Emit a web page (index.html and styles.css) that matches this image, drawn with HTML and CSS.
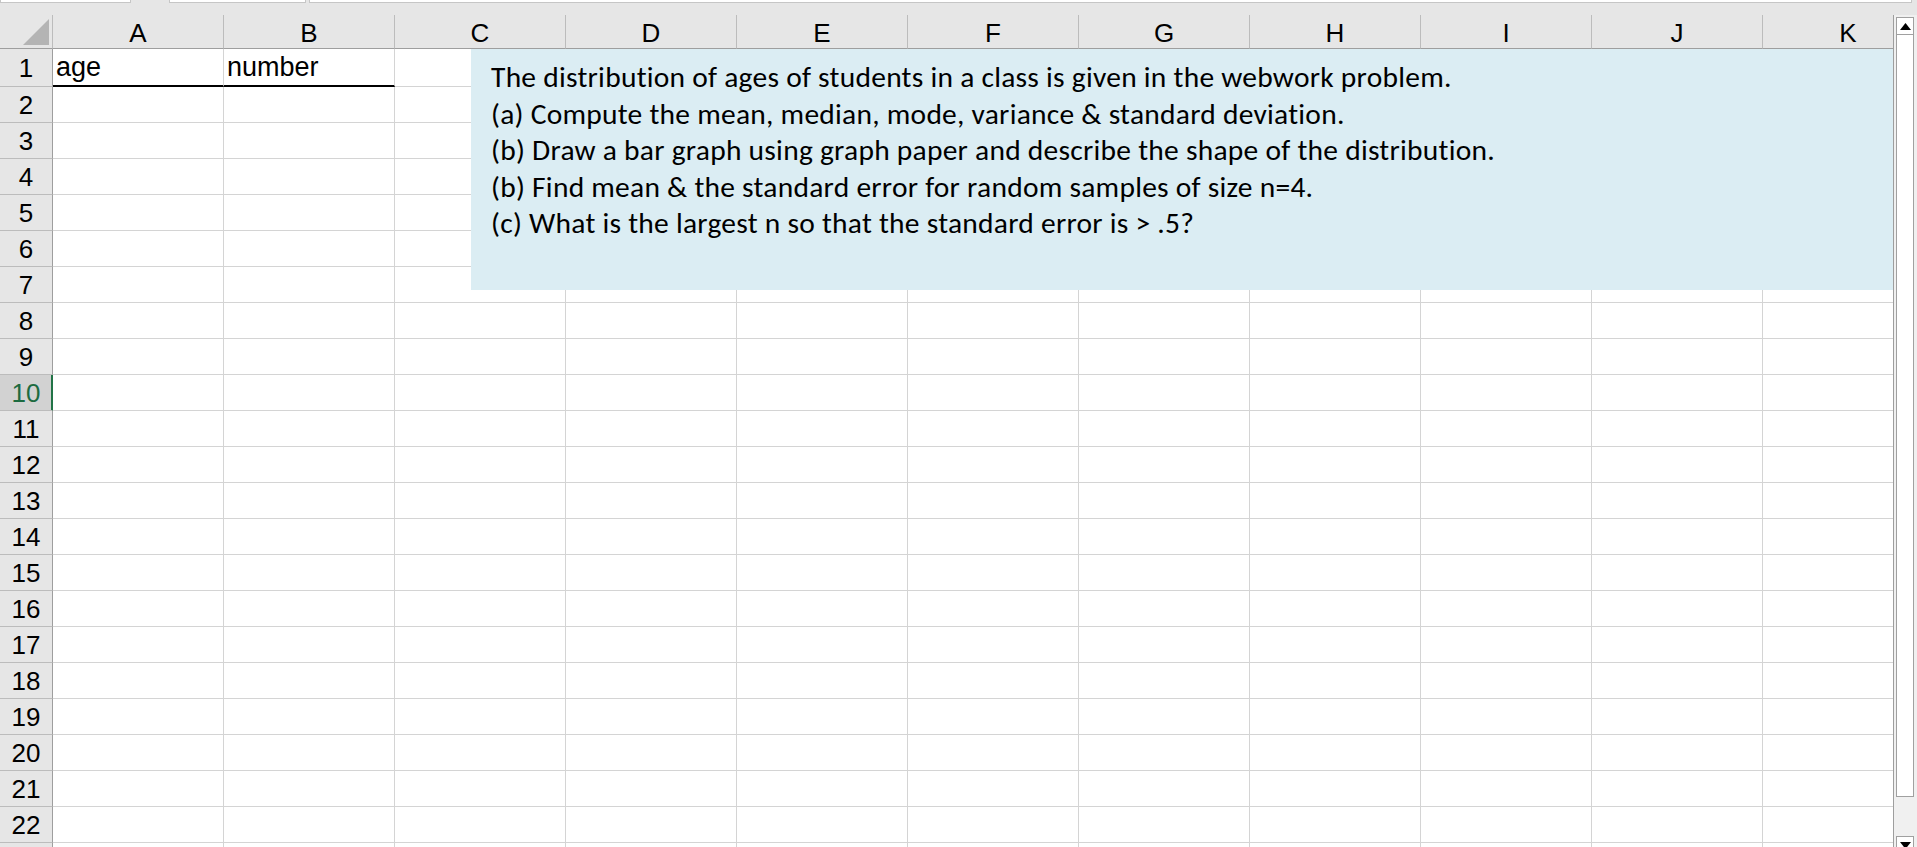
FILE: index.html
```html
<!DOCTYPE html>
<html>
<head>
<meta charset="utf-8">
<title>Sheet</title>
<link rel="stylesheet" href="styles.css">
</head>
<body>
<div class="app">
  <div class="topbar">
    <div class="tb tb1"></div>
    <div class="tb tb2"></div>
    <div class="tb tb3"></div>
  </div>
  <div class="main">
    <div class="sheet">
      <div class="grid">
        <div class="corner"><svg width="53" height="34" viewBox="0 0 53 34"><polygon points="23,30 49,30 49,4" fill="#b4b4b4"/></svg></div>
        <div class="ch">A</div><div class="ch">B</div><div class="ch">C</div><div class="ch">D</div><div class="ch">E</div><div class="ch">F</div><div class="ch">G</div><div class="ch">H</div><div class="ch">I</div><div class="ch">J</div><div class="ch">K</div>

        <div class="rh">1</div><div class="c hdr">age</div><div class="c hdr">number</div><div class="c"></div><div class="c"></div><div class="c"></div><div class="c"></div><div class="c"></div><div class="c"></div><div class="c"></div><div class="c"></div><div class="c"></div>
        <div class="rh">2</div><div class="c"></div><div class="c"></div><div class="c"></div><div class="c"></div><div class="c"></div><div class="c"></div><div class="c"></div><div class="c"></div><div class="c"></div><div class="c"></div><div class="c"></div>
        <div class="rh">3</div><div class="c"></div><div class="c"></div><div class="c"></div><div class="c"></div><div class="c"></div><div class="c"></div><div class="c"></div><div class="c"></div><div class="c"></div><div class="c"></div><div class="c"></div>
        <div class="rh">4</div><div class="c"></div><div class="c"></div><div class="c"></div><div class="c"></div><div class="c"></div><div class="c"></div><div class="c"></div><div class="c"></div><div class="c"></div><div class="c"></div><div class="c"></div>
        <div class="rh">5</div><div class="c"></div><div class="c"></div><div class="c"></div><div class="c"></div><div class="c"></div><div class="c"></div><div class="c"></div><div class="c"></div><div class="c"></div><div class="c"></div><div class="c"></div>
        <div class="rh">6</div><div class="c"></div><div class="c"></div><div class="c"></div><div class="c"></div><div class="c"></div><div class="c"></div><div class="c"></div><div class="c"></div><div class="c"></div><div class="c"></div><div class="c"></div>
        <div class="rh">7</div><div class="c"></div><div class="c"></div><div class="c"></div><div class="c"></div><div class="c"></div><div class="c"></div><div class="c"></div><div class="c"></div><div class="c"></div><div class="c"></div><div class="c"></div>
        <div class="rh">8</div><div class="c"></div><div class="c"></div><div class="c"></div><div class="c"></div><div class="c"></div><div class="c"></div><div class="c"></div><div class="c"></div><div class="c"></div><div class="c"></div><div class="c"></div>
        <div class="rh">9</div><div class="c"></div><div class="c"></div><div class="c"></div><div class="c"></div><div class="c"></div><div class="c"></div><div class="c"></div><div class="c"></div><div class="c"></div><div class="c"></div><div class="c"></div>
        <div class="rh sel">10</div><div class="c"></div><div class="c"></div><div class="c"></div><div class="c"></div><div class="c"></div><div class="c"></div><div class="c"></div><div class="c"></div><div class="c"></div><div class="c"></div><div class="c"></div>
        <div class="rh">11</div><div class="c"></div><div class="c"></div><div class="c"></div><div class="c"></div><div class="c"></div><div class="c"></div><div class="c"></div><div class="c"></div><div class="c"></div><div class="c"></div><div class="c"></div>
        <div class="rh">12</div><div class="c"></div><div class="c"></div><div class="c"></div><div class="c"></div><div class="c"></div><div class="c"></div><div class="c"></div><div class="c"></div><div class="c"></div><div class="c"></div><div class="c"></div>
        <div class="rh">13</div><div class="c"></div><div class="c"></div><div class="c"></div><div class="c"></div><div class="c"></div><div class="c"></div><div class="c"></div><div class="c"></div><div class="c"></div><div class="c"></div><div class="c"></div>
        <div class="rh">14</div><div class="c"></div><div class="c"></div><div class="c"></div><div class="c"></div><div class="c"></div><div class="c"></div><div class="c"></div><div class="c"></div><div class="c"></div><div class="c"></div><div class="c"></div>
        <div class="rh">15</div><div class="c"></div><div class="c"></div><div class="c"></div><div class="c"></div><div class="c"></div><div class="c"></div><div class="c"></div><div class="c"></div><div class="c"></div><div class="c"></div><div class="c"></div>
        <div class="rh">16</div><div class="c"></div><div class="c"></div><div class="c"></div><div class="c"></div><div class="c"></div><div class="c"></div><div class="c"></div><div class="c"></div><div class="c"></div><div class="c"></div><div class="c"></div>
        <div class="rh">17</div><div class="c"></div><div class="c"></div><div class="c"></div><div class="c"></div><div class="c"></div><div class="c"></div><div class="c"></div><div class="c"></div><div class="c"></div><div class="c"></div><div class="c"></div>
        <div class="rh">18</div><div class="c"></div><div class="c"></div><div class="c"></div><div class="c"></div><div class="c"></div><div class="c"></div><div class="c"></div><div class="c"></div><div class="c"></div><div class="c"></div><div class="c"></div>
        <div class="rh">19</div><div class="c"></div><div class="c"></div><div class="c"></div><div class="c"></div><div class="c"></div><div class="c"></div><div class="c"></div><div class="c"></div><div class="c"></div><div class="c"></div><div class="c"></div>
        <div class="rh">20</div><div class="c"></div><div class="c"></div><div class="c"></div><div class="c"></div><div class="c"></div><div class="c"></div><div class="c"></div><div class="c"></div><div class="c"></div><div class="c"></div><div class="c"></div>
        <div class="rh">21</div><div class="c"></div><div class="c"></div><div class="c"></div><div class="c"></div><div class="c"></div><div class="c"></div><div class="c"></div><div class="c"></div><div class="c"></div><div class="c"></div><div class="c"></div>
        <div class="rh">22</div><div class="c"></div><div class="c"></div><div class="c"></div><div class="c"></div><div class="c"></div><div class="c"></div><div class="c"></div><div class="c"></div><div class="c"></div><div class="c"></div><div class="c"></div>
        <div class="rh"></div><div class="c"></div><div class="c"></div><div class="c"></div><div class="c"></div><div class="c"></div><div class="c"></div><div class="c"></div><div class="c"></div><div class="c"></div><div class="c"></div><div class="c"></div>
      </div>
      <div class="textbox">
        <p>The distribution of ages of students in a class is given in the webwork problem.</p>
        <p>(a) Compute the mean, median, mode, variance &amp; standard deviation.</p>
        <p>(b) Draw a bar graph using graph paper and describe the shape of the distribution.</p>
        <p>(b) Find mean &amp; the standard error for random samples of size n=4.</p>
        <p>(c) What is the largest n so that the standard error is &gt; .5?</p>
      </div>
    </div>
    <div class="vscroll">
      <div class="sbtn up"><svg width="11" height="7" viewBox="0 0 11 7"><polygon points="0,7 11,7 5.5,0" fill="#000"/></svg></div>
      <div class="thumb"></div>
      <div class="track"></div>
      <div class="sbtn down"><svg width="11" height="7" viewBox="0 0 11 7"><polygon points="0,0 11,0 5.5,7" fill="#000"/></svg></div>
    </div>
  </div>
</div>
</body>
</html>
```

FILE: styles.css
```css
* { box-sizing: border-box; }
html, body {
  margin: 0;
  padding: 0;
  width: 1917px;
  height: 847px;
  overflow: hidden;
  background: #e6e6e6;
}
.app {
  width: 1917px;
  height: 847px;
  display: flex;
  flex-direction: column;
  font-family: "Liberation Sans", Arial, sans-serif;
  color: #000;
}
.topbar {
  height: 15px;
  flex: none;
  display: flex;
  align-items: flex-start;
  background: #e6e6e6;
}
.tb {
  height: 3px;
  background: #fff;
  border: 1px solid #c6c6c6;
  border-top: none;
}
.tb1 { width: 131px; margin-right: 38px; }
.tb2 { width: 137px; margin-right: 3px; }
.tb3 { flex: 1; margin-right: 5px; }

.main {
  flex: 1;
  display: flex;
  min-height: 0;
}
.sheet {
  position: relative;
  width: 1894px;
  flex: none;
  overflow: hidden;
  border-right: 1px solid #9e9e9e;
  background: #fff;
}
.grid {
  display: grid;
  grid-template-columns: 53px repeat(11, 171px);
  grid-template-rows: 34px 38px repeat(22, 36px);
  width: max-content;
  font-size: 26px;
  line-height: 30px;
}
.corner {
  background: #e6e6e6;
  border-right: 1px solid #bcbcbc;
  border-bottom: 1px solid #9e9e9e;
}
.corner svg { display: block; }
.ch {
  background: #e6e6e6;
  border-right: 1px solid #bcbcbc;
  border-bottom: 1px solid #9e9e9e;
  display: flex;
  align-items: center;
  justify-content: center;
  padding-top: 3px;
}
.rh {
  background: #e6e6e6;
  border-right: 1px solid #9e9e9e;
  border-bottom: 1px solid #bcbcbc;
  display: flex;
  align-items: center;
  justify-content: center;
}
.rh.sel {
  background: #d2d2d2;
  color: #1d6b41;
  border-right-color: #217346;
  box-shadow: inset -1px 0 0 #217346;
}
.c {
  border-right: 1px solid #d4d4d4;
  border-bottom: 1px solid #d4d4d4;
  display: flex;
  align-items: center;
  padding-left: 3px;
  white-space: nowrap;
  font-size: 27px;
}
.c.hdr {
  border-bottom: 2px solid #000;
}

.textbox {
  position: absolute;
  left: 471px;
  top: 34px;
  width: 1440px;
  height: 241px;
  background: #dbedf3;
  padding: 10px 0 0 20px;
  font-family: Calibri, Carlito, Lato, sans-serif;
  font-size: 29.5px;
  letter-spacing: 0.25px;
  line-height: 36.5px;
  color: #000;
}
.textbox p {
  margin: 0;
  white-space: nowrap;
}

.vscroll {
  flex: 1;
  position: relative;
  background: #f0f0f0;
  display: flex;
  flex-direction: column;
  padding: 2px 3px 0 2px;
}
.sbtn {
  height: 18px;
  flex: none;
  background: #fff;
  border: 1px solid #a0a0a0;
  display: flex;
  align-items: center;
  justify-content: center;
}
.sbtn svg { display: block; }
.thumb {
  height: 762px;
  flex: none;
  background: #fff;
  border: 1px solid #a0a0a0;
  border-top: none;
}
.track {
  height: 39px;
  flex: none;
}
```
